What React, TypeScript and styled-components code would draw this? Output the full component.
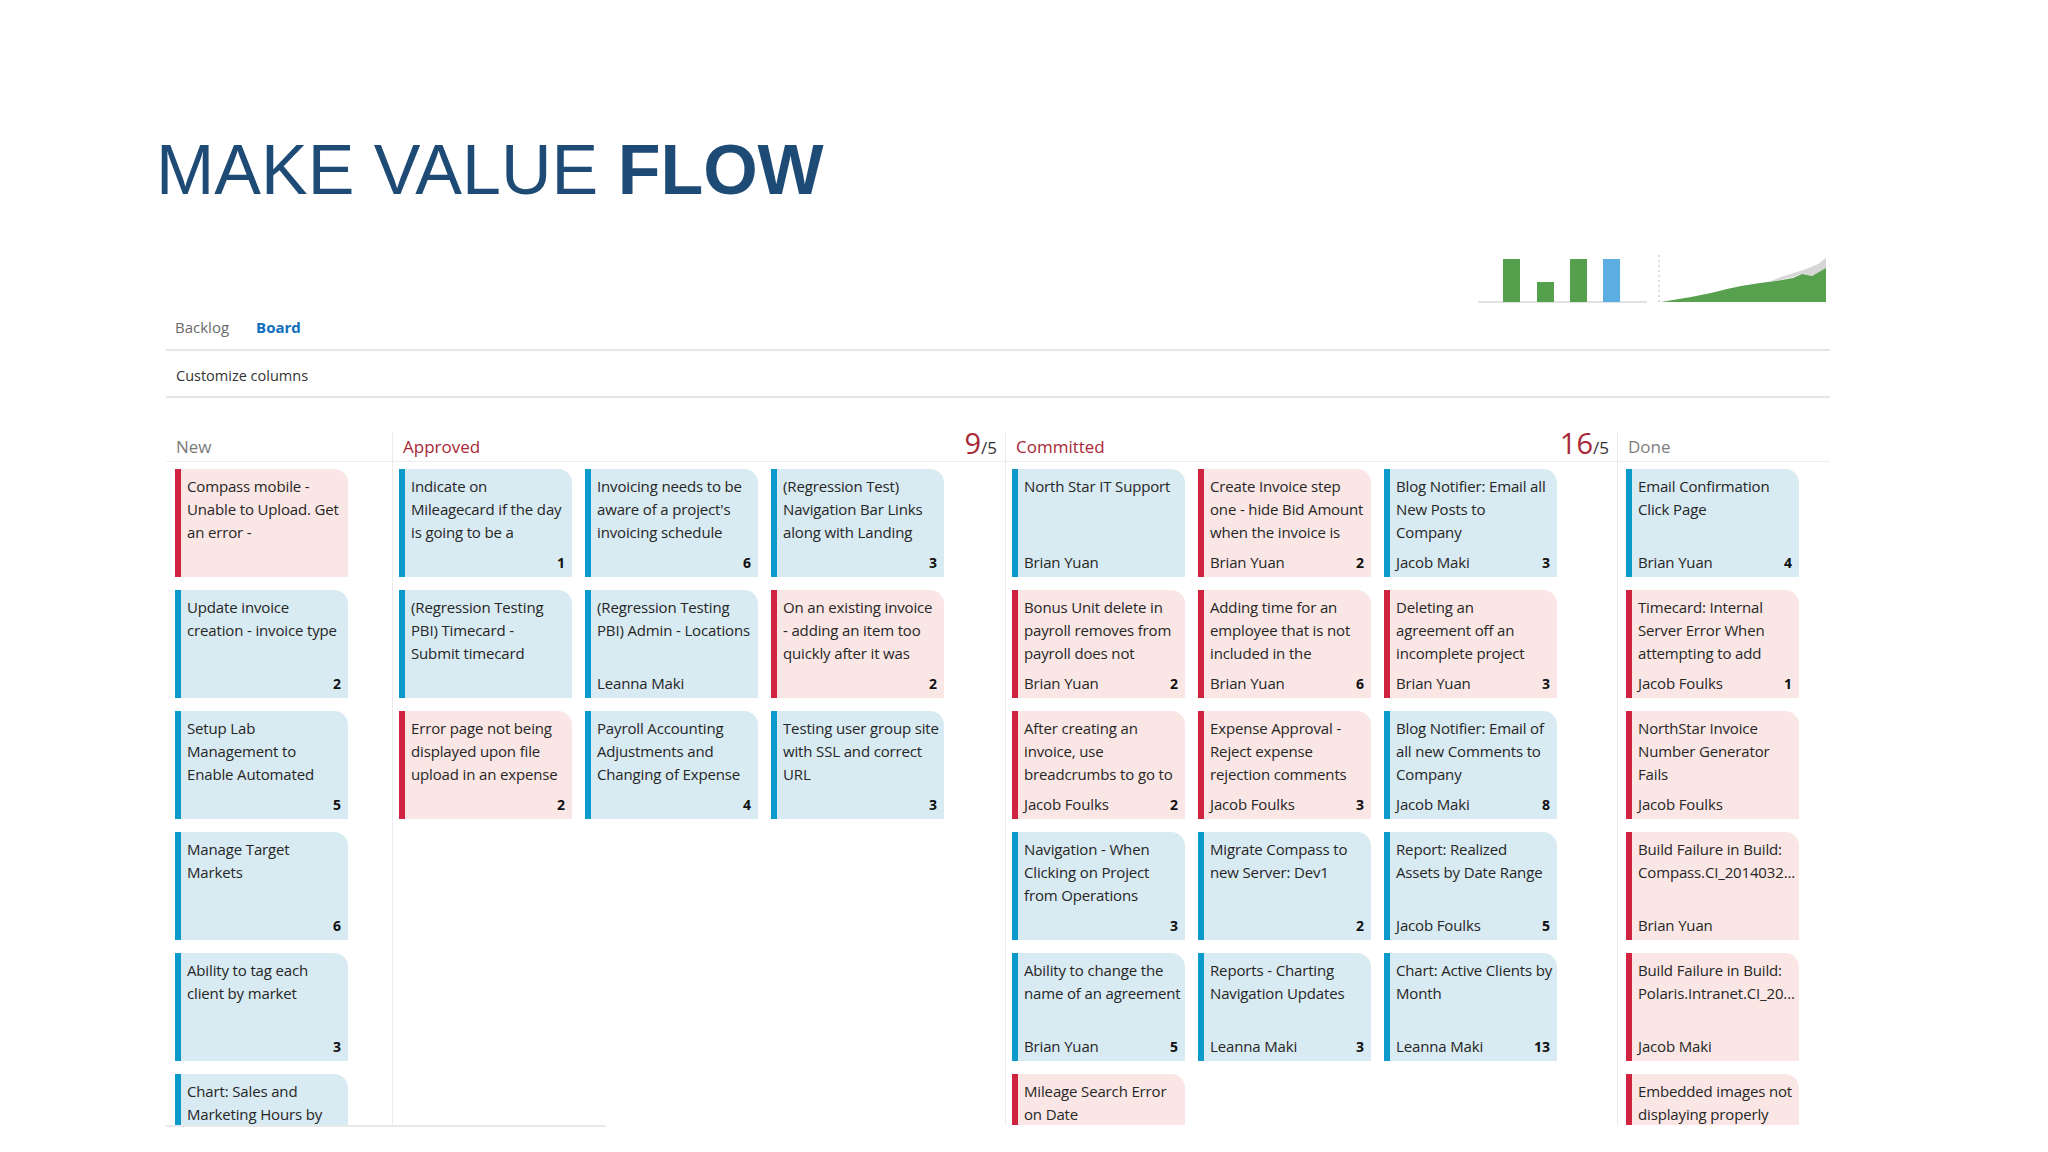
import styled, { createGlobalStyle } from 'styled-components';

type Tone = 'bug' | 'item';

interface WorkItem {
	lines: string[];
	tone: Tone;
	owner?: string;
	effort?: number;
}

interface BoardColumn {
	name: string;
	accent: string;
	width: number;
	inset: number;
	cols: number;
	wip?: [number, number];
	items: WorkItem[];
}

const GlobalStyle = createGlobalStyle`
	body {
		margin: 0;
		background: #ffffff;
		font-family: 'Open Sans', 'Noto Sans', sans-serif;
		color: #222;
	}
`;

const Page = styled.div`
	padding-top: 135px;
	height: 1152px;
	box-sizing: border-box;
	overflow: hidden;
`;

const Title = styled.h1`
	margin: 0;
	padding-left: 156px;
	font-family: 'Liberation Sans', Arial, sans-serif;
	font-size: 70px;
	line-height: 70px;
	font-weight: 400;
	color: #1e4b75;

	strong {
		font-weight: 700;
	}
`;

const Board = styled.div`
	margin-left: 166px;
	width: 1664px;
`;

const ChartRow = styled.div`
	display: flex;
	justify-content: flex-end;
	margin-top: 47px;
	padding-right: 2px;
	height: 52px;
`;

const Tabs = styled.div`
	display: flex;
	gap: 27px;
	margin-top: 13px;
	padding: 0 9px 12px;
	border-bottom: 2px solid #e6e6e6;
	font-size: 15px;
	line-height: 20px;
`;

const Tab = styled.span<{ $active?: boolean }>`
	color: ${(p) => (p.$active ? '#106ebe' : '#6b6b6b')};
	font-weight: ${(p) => (p.$active ? 700 : 400)};
`;

const Toolbar = styled.div`
	padding: 15px 10px 10px;
	border-bottom: 2px solid #e6e6e6;
	font-size: 14.5px;
	line-height: 20px;
	color: #333;
`;

const Columns = styled.div`
	display: flex;
	margin-top: 33px;
	height: 694px;
`;

const Column = styled.section<{ $width: number; $first?: boolean }>`
	flex: 0 0 ${(p) => p.$width}px;
	box-sizing: border-box;
	border-left: ${(p) => (p.$first ? 'none' : '1px solid #ebebeb')};
	display: flex;
	flex-direction: column;
`;

const ColumnHead = styled.header`
	flex: none;
	display: flex;
	justify-content: space-between;
	align-items: flex-end;
	height: 31px;
	box-sizing: border-box;
	padding: 0 8px 2px 10px;
	border-bottom: 1px solid #eeeeee;
`;

const ColumnName = styled.span<{ $accent: string }>`
	font-size: 17px;
	line-height: 24px;
	color: ${(p) => p.$accent};
`;

const Wip = styled.span`
	font-size: 29px;
	line-height: 24px;
	margin-bottom: -1px;
	color: #a82838;

	small {
		font-size: 17px;
		color: #333;
	}
`;

const CardGrid = styled.div<{ $cols: number; $inset: number }>`
	flex: 1 1 auto;
	min-height: 0;
	overflow: hidden;
	display: grid;
	grid-template-columns: repeat(${(p) => p.$cols}, 173px);
	grid-auto-rows: 108px;
	align-content: start;
	gap: 13px;
	padding: 7px 0 0 ${(p) => p.$inset}px;
`;

const CardBox = styled.article<{ $tone: Tone }>`
	display: flex;
	flex-direction: column;
	justify-content: space-between;
	box-sizing: border-box;
	padding: 6px 7px 3px 6px;
	border-left: 6px solid ${(p) => (p.$tone === 'bug' ? '#cf2340' : '#0a9acb')};
	border-top-right-radius: 14px;
	background: ${(p) => (p.$tone === 'bug' ? '#fae6e5' : '#d8eaf2')};
	font-size: 15px;
	line-height: 23px;
	letter-spacing: -0.15px;
	color: #262626;
	overflow: hidden;
`;

const CardLine = styled.div`
	white-space: nowrap;
	margin-right: -6px;
`;

const CardFoot = styled.div`
	display: flex;
	justify-content: space-between;
	min-height: 23px;
`;

const Effort = styled.span`
	font-weight: 700;
	font-size: 14px;
	letter-spacing: 0;
	color: #111;
`;

const Scrollbar = styled.div`
	width: 440px;
	height: 2px;
	background: #e8e8e8;
`;

const columns: BoardColumn[] = [
	{
		name: 'New',
		accent: '#7a7a7a',
		width: 226,
		inset: 9,
		cols: 1,
		items: [
			{ lines: ['Compass mobile -', 'Unable to Upload. Get', 'an error -'], tone: 'bug' },
			{ lines: ['Update invoice', 'creation - invoice type'], tone: 'item', effort: 2 },
			{ lines: ['Setup Lab', 'Management to', 'Enable Automated'], tone: 'item', effort: 5 },
			{ lines: ['Manage Target', 'Markets'], tone: 'item', effort: 6 },
			{ lines: ['Ability to tag each', 'client by market'], tone: 'item', effort: 3 },
			{ lines: ['Chart: Sales and', 'Marketing Hours by'], tone: 'item' },
		],
	},
	{
		name: 'Approved',
		accent: '#a82838',
		width: 613,
		inset: 6,
		cols: 3,
		wip: [9, 5],
		items: [
			{ lines: ['Indicate on', 'Mileagecard if the day', 'is going to be a'], tone: 'item', effort: 1 },
			{ lines: ['Invoicing needs to be', "aware of a project's", 'invoicing schedule'], tone: 'item', effort: 6 },
			{ lines: ['(Regression Test)', 'Navigation Bar Links', 'along with Landing'], tone: 'item', effort: 3 },
			{ lines: ['(Regression Testing', 'PBI) Timecard -', 'Submit timecard'], tone: 'item' },
			{ lines: ['(Regression Testing', 'PBI) Admin - Locations'], tone: 'item', owner: 'Leanna Maki' },
			{ lines: ['On an existing invoice', '- adding an item too', 'quickly after it was'], tone: 'bug', effort: 2 },
			{ lines: ['Error page not being', 'displayed upon file', 'upload in an expense'], tone: 'bug', effort: 2 },
			{ lines: ['Payroll Accounting', 'Adjustments and', 'Changing of Expense'], tone: 'item', effort: 4 },
			{ lines: ['Testing user group site', 'with SSL and correct', 'URL'], tone: 'item', effort: 3 },
		],
	},
	{
		name: 'Committed',
		accent: '#a82838',
		width: 612,
		inset: 6,
		cols: 3,
		wip: [16, 5],
		items: [
			{ lines: ['North Star IT Support'], tone: 'item', owner: 'Brian Yuan' },
			{ lines: ['Create Invoice step', 'one - hide Bid Amount', 'when the invoice is'], tone: 'bug', owner: 'Brian Yuan', effort: 2 },
			{ lines: ['Blog Notifier: Email all', 'New Posts to', 'Company'], tone: 'item', owner: 'Jacob Maki', effort: 3 },
			{ lines: ['Bonus Unit delete in', 'payroll removes from', 'payroll does not'], tone: 'bug', owner: 'Brian Yuan', effort: 2 },
			{ lines: ['Adding time for an', 'employee that is not', 'included in the'], tone: 'bug', owner: 'Brian Yuan', effort: 6 },
			{ lines: ['Deleting an', 'agreement off an', 'incomplete project'], tone: 'bug', owner: 'Brian Yuan', effort: 3 },
			{ lines: ['After creating an', 'invoice, use', 'breadcrumbs to go to'], tone: 'bug', owner: 'Jacob Foulks', effort: 2 },
			{ lines: ['Expense Approval -', 'Reject expense', 'rejection comments'], tone: 'bug', owner: 'Jacob Foulks', effort: 3 },
			{ lines: ['Blog Notifier: Email of', 'all new Comments to', 'Company'], tone: 'item', owner: 'Jacob Maki', effort: 8 },
			{ lines: ['Navigation - When', 'Clicking on Project', 'from Operations'], tone: 'item', effort: 3 },
			{ lines: ['Migrate Compass to', 'new Server: Dev1'], tone: 'item', effort: 2 },
			{ lines: ['Report: Realized', 'Assets by Date Range'], tone: 'item', owner: 'Jacob Foulks', effort: 5 },
			{ lines: ['Ability to change the', 'name of an agreement'], tone: 'item', owner: 'Brian Yuan', effort: 5 },
			{ lines: ['Reports - Charting', 'Navigation Updates'], tone: 'item', owner: 'Leanna Maki', effort: 3 },
			{ lines: ['Chart: Active Clients by', 'Month'], tone: 'item', owner: 'Leanna Maki', effort: 13 },
			{ lines: ['Mileage Search Error', 'on Date'], tone: 'bug' },
		],
	},
	{
		name: 'Done',
		accent: '#808080',
		width: 213,
		inset: 8,
		cols: 1,
		items: [
			{ lines: ['Email Confirmation', 'Click Page'], tone: 'item', owner: 'Brian Yuan', effort: 4 },
			{ lines: ['Timecard: Internal', 'Server Error When', 'attempting to add'], tone: 'bug', owner: 'Jacob Foulks', effort: 1 },
			{ lines: ['NorthStar Invoice', 'Number Generator', 'Fails'], tone: 'bug', owner: 'Jacob Foulks' },
			{ lines: ['Build Failure in Build:', 'Compass.CI_2014032...'], tone: 'bug', owner: 'Brian Yuan' },
			{ lines: ['Build Failure in Build:', 'Polaris.Intranet.CI_20...'], tone: 'bug', owner: 'Jacob Maki' },
			{ lines: ['Embedded images not', 'displaying properly'], tone: 'bug' },
		],
	},
];

// little cumulative-flow + velocity preview drawn top right of the board
const FlowChart = () => (
	<svg width="352" height="52" viewBox="0 0 352 52">
		<line x1="2" y1="50" x2="171" y2="50" stroke="#e2e2e2" strokeWidth="2" />
		<rect x="27" y="7" width="17" height="43" fill="#55a04d" />
		<rect x="61" y="30" width="17" height="20" fill="#55a04d" />
		<rect x="94" y="7" width="17" height="43" fill="#55a04d" />
		<rect x="127" y="7" width="17" height="43" fill="#5aaee2" />
		<line x1="183" y1="3" x2="183" y2="50" stroke="#bdbdbd" strokeWidth="1" strokeDasharray="2 3" />
		<path
			d="M292 30 L305 25 L318 21 L330 17 L342 12 L350 6 L350 16 L342 21 L335 24 L325 22 L317 25 L300 29 Z"
			fill="#d6d6d6"
		/>
		<path
			d="M185 50 L197 48 L215 45 L235 41 L251 37 L265 34 L284 31 L300 29 L317 26 L326 22 L336 24 L350 16 L350 50 Z"
			fill="#57a04e"
		/>
	</svg>
);

const Card = ({ item }: { item: WorkItem }) => (
	<CardBox $tone={item.tone}>
		<div>
			{item.lines.map((line) => (
				<CardLine key={line}>{line}</CardLine>
			))}
		</div>
		<CardFoot>
			<span>{item.owner}</span>
			<Effort>{item.effort}</Effort>
		</CardFoot>
	</CardBox>
);

const App = () => {
	return (
		<>
			<GlobalStyle />
			<Page>
				<Title>
					MAKE VALUE <strong>FLOW</strong>
				</Title>
				<Board>
					<ChartRow>
						<FlowChart />
					</ChartRow>
					<Tabs>
						<Tab>Backlog</Tab>
						<Tab $active>Board</Tab>
					</Tabs>
					<Toolbar>Customize columns</Toolbar>
					<Columns>
						{columns.map((col, i) => (
							<Column key={col.name} $width={col.width} $first={i === 0}>
								<ColumnHead>
									<ColumnName $accent={col.accent}>{col.name}</ColumnName>
									{col.wip && (
										<Wip>
											{col.wip[0]}
											<small>/{col.wip[1]}</small>
										</Wip>
									)}
								</ColumnHead>
								<CardGrid $cols={col.cols} $inset={col.inset}>
									{col.items.map((item) => (
										<Card key={item.lines.join(' ')} item={item} />
									))}
								</CardGrid>
							</Column>
						))}
					</Columns>
					<Scrollbar />
				</Board>
			</Page>
		</>
	);
};

export default App;
